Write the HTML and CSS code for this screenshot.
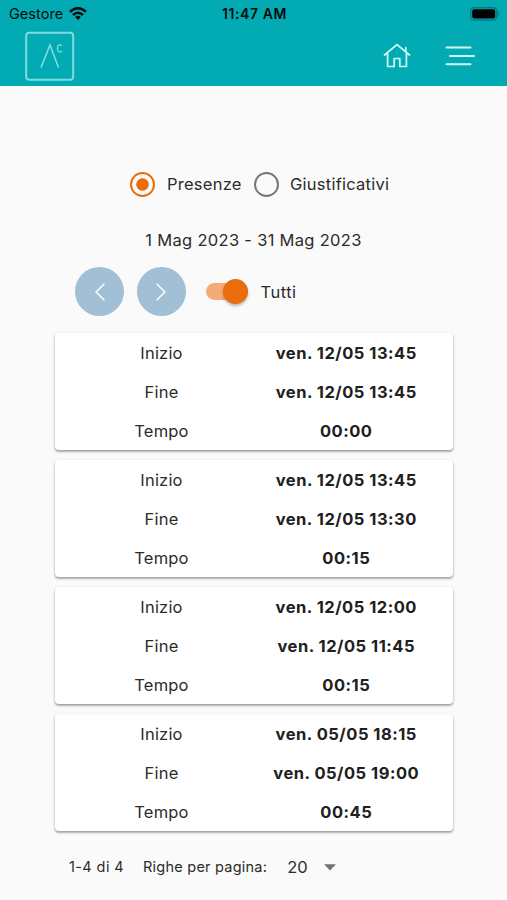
FILE: index.html
```html
<!DOCTYPE html>
<html lang="it">
<head>
<meta charset="utf-8">
<title>Presenze</title>
<link rel="stylesheet" href="styles.css">
</head>
<body>
<header class="top">
  <div class="status">
    <div class="carrier"><span>Gestore</span>
      <svg width="18" height="13" viewBox="0 0 18 13" fill="none" stroke="#02090a" stroke-width="2.5"><path d="M1 4.8Q9-2.2 17 4.8M4 8Q9 3.6 14 8"/><path d="M6.2 10.1Q9 7.6 11.8 10.1L9 12.9Z" fill="#02090a" stroke="none"/></svg>
    </div>
    <div class="clock">11:47 AM</div>
    <svg class="battery" width="30" height="14" viewBox="0 0 30 14"><rect x=".7" y=".7" width="26" height="12.4" rx="3.5" fill="none" stroke="#057b80" stroke-width="1.4"/><rect x="2.2" y="2.2" width="23" height="9.4" rx="2" fill="#000"/><path d="M28 4.6Q31 6.9 28 9.2Z" fill="#057b80"/></svg>
  </div>
  <nav class="bar">
    <svg class="logo" width="50" height="50" viewBox="0 0 50 50" fill="none" stroke="#7fdbe0"><rect x="1.2" y="1.7" width="47" height="47" rx="3" stroke-width="2"/><path d="M16 36.5 25 14 33.5 36.5" stroke-width="1.6"/><path d="M37 14.6Q36.2 13.8 35 13.8C31.6 13.8 31.6 20.8 35 20.8Q36.2 20.8 37 20" stroke-width="1.3"/></svg>
    <svg class="home" width="28" height="26" viewBox="0 0 28 26" fill="none" stroke="#d3fbfb" stroke-width="1.7" stroke-linejoin="round" stroke-linecap="round"><path d="M1.5 12 14 1.6 26.5 12M4.6 10V23.5H11.2V15.5H16.8V23.5H23.4V10M22.8 8.4V4.5"/></svg>
    <svg class="menu" width="30" height="22" viewBox="0 0 30 22" stroke="#d3fbfb" stroke-width="2" stroke-linecap="round"><path d="M1.5 2.6H25.5M5 11H29M1.5 19.3H25.5"/></svg>
  </nav>
</header>
<main>
  <div class="radios">
    <span class="radio on"></span><span class="presenze">Presenze</span>
    <span class="radio"></span><span class="giust">Giustificativi</span>
  </div>
  <div class="range">1 Mag 2023 - 31 Mag 2023</div>
  <div class="controls">
    <button class="round" aria-label="Precedente"><svg width="12" height="18" viewBox="0 0 12 18"><path d="M10 1.2 2 9l8 7.8"/></svg></button>
    <button class="round" aria-label="Successivo"><svg width="12" height="18" viewBox="0 0 12 18"><path d="M2 1.2 10 9l-8 7.8"/></svg></button>
    <span class="switch"><span class="knob"></span></span>
    <span class="all">Tutti</span>
  </div>
  <section class="cards">
    <dl class="card"><dt>Inizio</dt><dd>ven. 12/05 13:45</dd><dt>Fine</dt><dd>ven. 12/05 13:45</dd><dt>Tempo</dt><dd>00:00</dd></dl>
    <dl class="card"><dt>Inizio</dt><dd>ven. 12/05 13:45</dd><dt>Fine</dt><dd>ven. 12/05 13:30</dd><dt>Tempo</dt><dd>00:15</dd></dl>
    <dl class="card"><dt>Inizio</dt><dd>ven. 12/05 12:00</dd><dt>Fine</dt><dd>ven. 12/05 11:45</dd><dt>Tempo</dt><dd>00:15</dd></dl>
    <dl class="card"><dt>Inizio</dt><dd>ven. 05/05 18:15</dd><dt>Fine</dt><dd>ven. 05/05 19:00</dd><dt>Tempo</dt><dd>00:45</dd></dl>
  </section>
  <footer class="pager">
    <span class="count">1-4 di 4</span><span class="per">Righe per pagina:</span><span class="size">20</span>
    <svg width="12" height="7" viewBox="0 0 12 7"><path d="M0 .3H12L6 6.5Z" fill="#747474"/></svg>
  </footer>
</main>
</body>
</html>
```

FILE: styles.css
```css
* { box-sizing: border-box; }
body { margin: 0; height: 900px; overflow: hidden; background: #fafafa; color: #2c2c2c; font: 16.5px/20px Inter, sans-serif; white-space: nowrap; }
svg { display: block; flex: none; }
.top { height: 86px; background: #02abb3; }
.status { height: 28px; display: grid; grid-template-columns: 1fr auto 1fr; align-items: center; padding: 0 7px 0 9px; color: #02090a; font-size: 14.5px; }
.carrier { display: flex; align-items: center; gap: 6px; letter-spacing: .05px; }
.carrier svg { margin-top: -2px; }
.clock { font-weight: 600; font-size: 14px; letter-spacing: .6px; }
.battery { justify-self: end; margin-top: -1px; }
.bar { display: flex; align-items: center; padding: 3px 32px 0 25px; }
.home { margin-left: auto; margin-right: 34px; }
main { padding-top: 86px; }
.radios { display: flex; align-items: center; height: 24px; padding-left: 130px; letter-spacing: .25px; }
.radio { width: 25px; height: 25px; border: 2px solid #777; border-radius: 50%; flex: none; }
.radio.on { border-color: #e96d0c; background: radial-gradient(circle, #e96d0c 5.8px, #fff0 6.6px); }
.presenze { width: 87px; padding-left: 12px; margin-right: 11.5px; }
.giust { margin-left: 11.5px; }
.range { margin-top: 34px; text-align: center; line-height: 20px; letter-spacing: .3px; }
.controls { display: flex; align-items: center; height: 49px; margin-top: 17px; padding-left: 75px; }
.round { width: 49px; height: 49px; margin-right: 12.5px; padding: 0; border: 0; border-radius: 50%; background: #a1bfd5; display: grid; place-items: center; }
.round path { fill: none; stroke: #fff; stroke-width: 1.5; stroke-linecap: round; stroke-linejoin: round; }
.switch { width: 42px; height: 17px; margin-left: 8px; border-radius: 9px; background: #f4ac76; display: flex; align-items: center; justify-content: flex-end; }
.knob { width: 25px; height: 25px; flex: none; border-radius: 50%; background: #e96d0c; box-shadow: 0 2px 3px #0004; }
.all { margin-left: 12.5px; letter-spacing: .5px; }
.cards { display: grid; gap: 10px; width: 398.5px; margin: 17px 0 0 54.5px; }
.card { margin: 0; height: 117px; display: grid; grid-template-columns: 214px 1fr; grid-auto-rows: 39px; line-height: 40px; text-align: center; background: #fff; border-radius: 4px; box-shadow: 0 2px 2px #00000038, 0 1px 3px #00000038; letter-spacing: .2px; }
dd { margin: 0 29px 0 0; font-weight: 700; font-size: 16.5px; color: #202020; letter-spacing: .5px; }
dt { margin: 0; }
.pager { display: flex; align-items: center; height: 20px; margin-top: 26px; padding-left: 69px; font-size: 14.5px; letter-spacing: .4px; }
.per { margin-left: 19px; letter-spacing: .23px; }
.size { margin-left: 20px; font-size: 16.5px; letter-spacing: 0; }
.pager svg { margin-left: 16px; }
```
